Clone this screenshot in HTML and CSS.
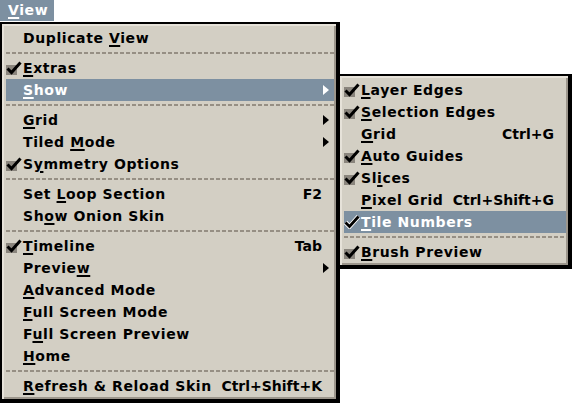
FILE: index.html
```html
<!DOCTYPE html>
<html>
<head>
<meta charset="utf-8">
<link rel="stylesheet" href="styles.css">
</head>
<body>
<div class="screen">
  <div class="menubar"><div class="mb-item"><u>V</u>iew</div></div>

  <div class="menu main">
    <div class="item"><span class="chk"></span><span class="label">Duplicate <u>V</u>iew</span></div>
    <div class="sep"></div>
    <div class="item"><span class="chk on"><svg viewBox="0 0 16 14" width="16" height="14"><rect x="0" y="4" width="11" height="10" fill="#8a857d"/><polyline points="1.5,7.5 5.5,11.5 14.5,1.5" fill="none" stroke="#000" stroke-width="3"/></svg></span><span class="label"><u>E</u>xtras</span></div>
    <div class="item hl"><span class="chk"></span><span class="label"><u>S</u>how</span><span class="arrow"></span></div>
    <div class="sep"></div>
    <div class="item"><span class="chk"></span><span class="label"><u>G</u>rid</span><span class="arrow"></span></div>
    <div class="item"><span class="chk"></span><span class="label">Tiled <u>M</u>ode</span><span class="arrow"></span></div>
    <div class="item"><span class="chk on"><svg viewBox="0 0 16 14" width="16" height="14"><rect x="0" y="4" width="11" height="10" fill="#8a857d"/><polyline points="1.5,7.5 5.5,11.5 14.5,1.5" fill="none" stroke="#000" stroke-width="3"/></svg></span><span class="label">S<u>y</u>mmetry Options</span></div>
    <div class="sep"></div>
    <div class="item"><span class="chk"></span><span class="label">Set <u>L</u>oop Section</span><span class="key">F2</span></div>
    <div class="item"><span class="chk"></span><span class="label">Sh<u>o</u>w Onion Skin</span></div>
    <div class="sep"></div>
    <div class="item"><span class="chk on"><svg viewBox="0 0 16 14" width="16" height="14"><rect x="0" y="4" width="11" height="10" fill="#8a857d"/><polyline points="1.5,7.5 5.5,11.5 14.5,1.5" fill="none" stroke="#000" stroke-width="3"/></svg></span><span class="label"><u>T</u>imeline</span><span class="key">Tab</span></div>
    <div class="item"><span class="chk"></span><span class="label">Previe<u>w</u></span><span class="arrow"></span></div>
    <div class="item"><span class="chk"></span><span class="label"><u>A</u>dvanced Mode</span></div>
    <div class="item"><span class="chk"></span><span class="label"><u>F</u>ull Screen Mode</span></div>
    <div class="item"><span class="chk"></span><span class="label">F<u>u</u>ll Screen Preview</span></div>
    <div class="item"><span class="chk"></span><span class="label"><u>H</u>ome</span></div>
    <div class="sep"></div>
    <div class="item"><span class="chk"></span><span class="label"><u>R</u>efresh &amp; Reload Skin</span><span class="key">Ctrl+Shift+K</span></div>
  </div>

  <div class="menu sub">
    <div class="item"><span class="chk on"><svg viewBox="0 0 16 14" width="16" height="14"><rect x="0" y="4" width="11" height="10" fill="#8a857d"/><polyline points="1.5,7.5 5.5,11.5 14.5,1.5" fill="none" stroke="#000" stroke-width="3"/></svg></span><span class="label"><u>L</u>ayer Edges</span></div>
    <div class="item"><span class="chk on"><svg viewBox="0 0 16 14" width="16" height="14"><rect x="0" y="4" width="11" height="10" fill="#8a857d"/><polyline points="1.5,7.5 5.5,11.5 14.5,1.5" fill="none" stroke="#000" stroke-width="3"/></svg></span><span class="label"><u>S</u>election Edges</span></div>
    <div class="item"><span class="chk"></span><span class="label"><u>G</u>rid</span><span class="key">Ctrl+G</span></div>
    <div class="item"><span class="chk on"><svg viewBox="0 0 16 14" width="16" height="14"><rect x="0" y="4" width="11" height="10" fill="#8a857d"/><polyline points="1.5,7.5 5.5,11.5 14.5,1.5" fill="none" stroke="#000" stroke-width="3"/></svg></span><span class="label"><u>A</u>uto Guides</span></div>
    <div class="item"><span class="chk on"><svg viewBox="0 0 16 14" width="16" height="14"><rect x="0" y="4" width="11" height="10" fill="#8a857d"/><polyline points="1.5,7.5 5.5,11.5 14.5,1.5" fill="none" stroke="#000" stroke-width="3"/></svg></span><span class="label">Sl<u>i</u>ces</span></div>
    <div class="item"><span class="chk"></span><span class="label"><u>P</u>ixel Grid</span><span class="key">Ctrl+Shift+G</span></div>
    <div class="item hl"><span class="chk on"><svg viewBox="0 0 16 14" width="16" height="14"><polyline points="1.5,7.5 5.5,11.5 14.5,1.5" fill="none" stroke="#fff" stroke-width="4.6"/><polyline points="1.5,7.5 5.5,11.5 14.5,1.5" fill="none" stroke="#000" stroke-width="2.8"/></svg></span><span class="label"><u>T</u>ile Numbers</span></div>
    <div class="sep"></div>
    <div class="item"><span class="chk on"><svg viewBox="0 0 16 14" width="16" height="14"><rect x="0" y="4" width="11" height="10" fill="#8a857d"/><polyline points="1.5,7.5 5.5,11.5 14.5,1.5" fill="none" stroke="#000" stroke-width="3"/></svg></span><span class="label"><u>B</u>rush Preview</span></div>
  </div>
</div>
</body>
</html>
```

FILE: styles.css
```css
html, body {
  margin: 0;
  padding: 0;
  background: #ffffff;
}

.screen {
  position: relative;
  width: 572px;
  height: 404px;
  overflow: hidden;
  font-family: "DejaVu Sans", sans-serif;
  font-size: 14px;
  font-weight: bold;
  letter-spacing: 0.6px;
  color: #000;
}

u {
  text-decoration: underline;
  text-decoration-thickness: 2px;
  text-underline-offset: 2px;
}

.menubar {
  display: flex;
  height: 21px;
  margin-bottom: 1px;
}

.mb-item {
  background: #7d90a1;
  color: #fff;
  padding: 0 0 0 8px;
  line-height: 21px;
  width: 46px;
}

.menu {
  background: #d3cfc4;
  border: 2px solid #000;
  border-right-width: 4px;
  border-bottom-width: 4px;
  box-shadow: inset 2px 2px 0 #e6e2d9, inset -2px -2px 0 #9c968c;
}

.main {
  width: 328px;
  padding: 3px 2px 2px 4px;
}

.sub {
  position: absolute;
  left: 338px;
  top: 74px;
  width: 222px;
  padding: 3px 2px 2px 4px;
}

.item {
  display: flex;
  align-items: center;
  height: 22px;
  line-height: 22px;
  white-space: nowrap;
}

.item.hl {
  background: #7d90a1;
  color: #fff;
}

.chk {
  width: 16px;
  height: 14px;
  margin-right: 1px;
  flex: none;
  display: flex;
}

.label {
  flex: 1;
}

.key {
  margin-right: 12px;
  letter-spacing: 0;
}

.arrow {
  width: 0;
  height: 0;
  border-top: 5px solid transparent;
  border-bottom: 5px solid transparent;
  border-left: 6px solid #000;
  margin-right: 5px;
}

.hl .arrow {
  border-left-color: #fff;
}

.sep {
  height: 8px;
  background-image: repeating-linear-gradient(90deg, #968f84 0 4px, transparent 4px 6px);
  background-size: 100% 2px;
  background-position: 0 3px;
  background-repeat: no-repeat;
}
```
